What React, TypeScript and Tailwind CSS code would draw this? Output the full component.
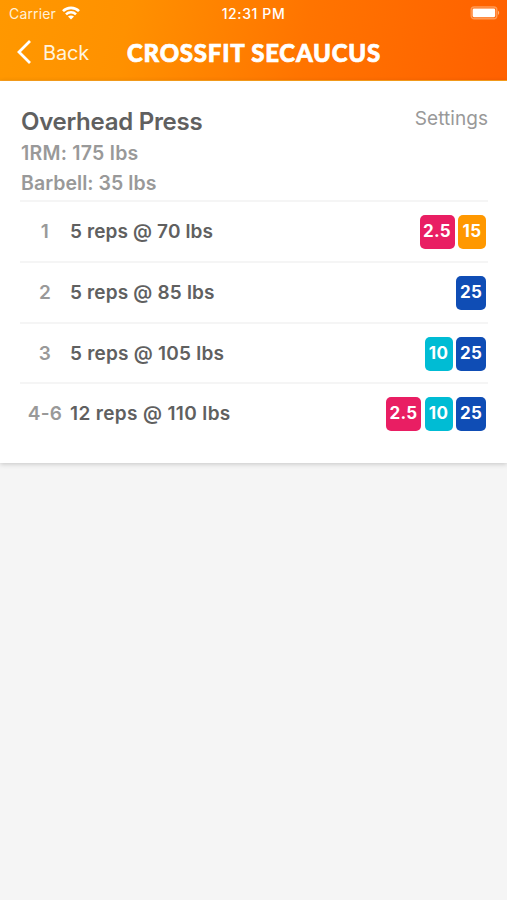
type Plate = { label: string; style: string };

const PINK: Plate = { label: '2.5', style: 'w-[35px] bg-[#e91e63]' };
const ORANGE: Plate = { label: '15', style: 'w-[28px] bg-[#ff9800]' };
const CYAN: Plate = { label: '10', style: 'w-[28px] bg-[#00bcd4]' };
const BLUE: Plate = { label: '25', style: 'w-[30px] bg-[#0f4db5]' };

const sets = [
  { id: '1', text: '5 reps @ 70 lbs', tracking: 'tracking-[0.13px]', plates: [PINK, ORANGE] },
  { id: '2', text: '5 reps @ 85 lbs', tracking: 'tracking-[0.17px]', plates: [BLUE] },
  { id: '3', text: '5 reps @ 105 lbs', tracking: 'tracking-[0.23px]', plates: [CYAN, BLUE] },
  { id: '4-6', text: '12 reps @ 110 lbs', tracking: 'tracking-[0.36px]', plates: [PINK, CYAN, BLUE] },
];

function Header() {
  return (
    <header className="h-[81px] border-b border-[#ffa21c] bg-[linear-gradient(100deg,#ff9800_0%,#ff9100_25%,#ff7400_60%,#ff6000_100%)] text-white">
      <div className="grid h-[27px] grid-cols-3 items-center pr-[7px] pl-[9px] text-[14px] leading-none">
        <div className="flex items-center gap-[6px] text-[#fff0d8]">
          <span className="tracking-[0.15px]">Carrier</span>
          <svg className="-mt-px" width="18" height="14" viewBox="0 0 18 14" fill="none" stroke="#fff" strokeWidth="2.6">
            <path d="M1 5.2C5.4.7 12.6.7 17 5.2" />
            <path d="M4 8.4c2.8-2.8 7.2-2.8 10 0" />
            <path d="M9 13.6l-3-3.1c1.7-1.5 4.3-1.5 6 0z" fill="#fff" stroke="none" />
          </svg>
        </div>
        <span className="-ml-[2px] text-center font-medium tracking-[0.6px] whitespace-nowrap">12:31 PM</span>
        <svg className="-mt-px justify-self-end" width="30" height="14" viewBox="0 0 30 14">
          <rect x="1.2" y="1" width="25.6" height="11.8" rx="3" fill="none" stroke="#ff9a55" strokeWidth="1.4" />
          <rect x="2.6" y="2.6" width="22.6" height="8.6" rx="1.4" fill="#fff" />
          <path d="M28 4.8c1.6.7 1.6 3.5 0 4.2z" fill="#ffb37c" />
        </svg>
      </div>
      <div className="flex h-[50px] items-center pl-[16px]">
        <svg width="16" height="26" viewBox="0 0 16 26" fill="none" stroke="#fff" strokeWidth="2.8">
          <path d="M14 2L3 13l11 11" />
        </svg>
        <span className="ml-[11px] w-[84px] pt-px text-[20px] leading-none tracking-[-0.2px] text-[#fff3df]">Back</span>
        <h1 className="pt-px font-['Lato','Liberation_Sans',sans-serif] text-[24px] leading-none font-black tracking-[0.76px] whitespace-nowrap [-webkit-text-stroke:0.7px_white]">
          CROSSFIT SECAUCUS
        </h1>
      </div>
    </header>
  );
}

export default function App() {
  return (
    <div className="min-h-screen bg-[#f5f5f5] font-['Inter','Liberation_Sans',sans-serif] antialiased">
      <Header />
      <main className="h-[382px] bg-white pt-[25px] pr-[19px] pl-[20px] shadow-[0_1px_5px_rgba(0,0,0,0.2)]">
        <div className="flex h-[94.3px] items-start justify-between text-[#999]">
          <div className="pl-px whitespace-nowrap">
            <h2 className="pt-px text-[24px] leading-[30px] font-semibold tracking-[-0.27px] text-[#606060]">
              Overhead Press
            </h2>
            <p className="mt-px text-[19.5px] leading-[30px] font-semibold tracking-[0.25px]">1RM: 175 lbs</p>
            <p className="text-[19.5px] leading-[30px] font-semibold tracking-[0.05px]">Barbell: 35 lbs</p>
          </div>
          <span className="pt-px text-[19px] leading-[24px] tracking-[0.05px]">Settings</span>
        </div>
        {sets.map((set) => (
          <div key={set.id} className="flex h-[60.7px] items-center border-t-2 border-[#f5f5f5] pr-[2px]">
            <span className="w-[50px] text-center text-[19px] leading-none font-semibold tracking-[0.3px] text-[#999]">
              {set.id}
            </span>
            <span className={`text-[19px] leading-none font-semibold whitespace-nowrap text-[#606060] ${set.tracking}`}>
              {set.text}
            </span>
            <div className="ml-auto flex gap-[3.5px] pt-px">
              {set.plates.map((plate) => (
                <span
                  key={plate.label}
                  className={`flex h-[34px] items-center justify-center rounded-[5px] text-[17px] font-bold tracking-[0.3px] text-white ${plate.style}`}
                >
                  {plate.label}
                </span>
              ))}
            </div>
          </div>
        ))}
      </main>
    </div>
  );
}
